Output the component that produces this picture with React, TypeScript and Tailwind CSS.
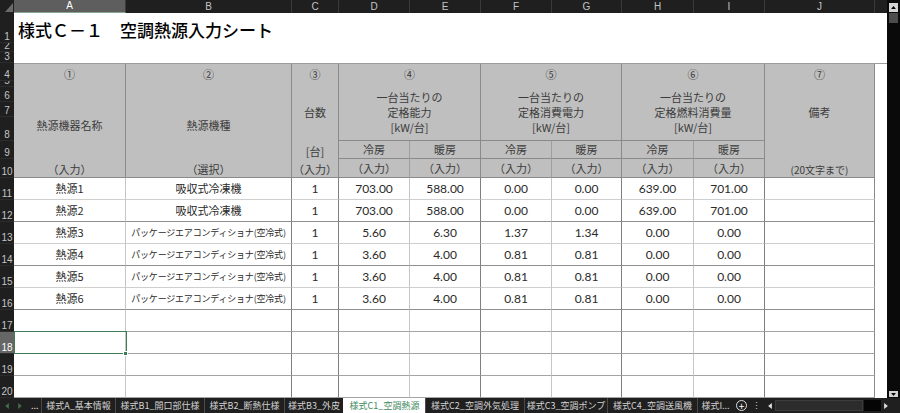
import React from 'react';

const JP = "font-['Noto_Sans_CJK_JP','Noto_Sans',sans-serif]";
const NUM = "font-['Lato','Noto_Sans_CJK_JP',sans-serif]";
const GRID =
  'grid grid-cols-[112px_166px_47px_71px_71px_71px_70px_72px_71px_110px_12px]';

// right border colour of each column in the body
const VLINE = [
  'border-r-[#c6c6c6]',
  'border-r-[#7f7f7f]',
  'border-r-[#7f7f7f]',
  'border-r-[#c6c6c6]',
  'border-r-[#7f7f7f]',
  'border-r-[#c6c6c6]',
  'border-r-[#7f7f7f]',
  'border-r-[#c6c6c6]',
  'border-r-[#7f7f7f]',
  'border-r-[#8a8a8a]',
];

const HLINE = [
  'border-b-[#cfcfcf]',
  'border-b-[#8f8f8f]',
  'border-b-[#cfcfcf]',
  'border-b-[#8f8f8f]',
  'border-b-[#cfcfcf]',
  'border-b-[#8f8f8f]',
  'border-b-[#a4a4a4]',
  'border-b-[#a4a4a4]',
  'border-b-[#a4a4a4]',
  'border-b-[#a4a4a4]',
];

const ROWS: [string, string][] = [
  ['1', 'h-[30px]'],
  ['2', 'h-[9px]'],
  ['3', 'h-[11px]'],
  ['4', 'h-[18px]'],
  ['5', 'h-[6px]'],
  ['6', 'h-[15px]'],
  ['7', 'h-[15px]'],
  ['8', 'h-[24px]'],
  ['9', 'h-[18px]'],
  ['10', 'h-[19px]'],
  ['11', 'h-[22px]'],
  ['12', 'h-[22px]'],
  ['13', 'h-[22px]'],
  ['14', 'h-[22px]'],
  ['15', 'h-[22px]'],
  ['16', 'h-[22px]'],
  ['17', 'h-[22px]'],
  ['18', 'h-[22px]'],
  ['19', 'h-[22px]'],
  ['20', 'h-[22px]'],
];

const COL_HEAD: [string, string][] = [
  ['A', 'w-[112px]'],
  ['B', 'w-[166px]'],
  ['C', 'w-[47px]'],
  ['D', 'w-[71px]'],
  ['E', 'w-[71px]'],
  ['F', 'w-[71px]'],
  ['G', 'w-[70px]'],
  ['H', 'w-[72px]'],
  ['I', 'w-[71px]'],
  ['J', 'w-[110px]'],
];

const PAC = 'パッケージエアコンディショナ(空冷式)';
const DATA: string[][] = [
  ['熱源1', '吸収式冷凍機', '1', '703.00', '588.00', '0.00', '0.00', '639.00', '701.00', ''],
  ['熱源2', '吸収式冷凍機', '1', '703.00', '588.00', '0.00', '0.00', '639.00', '701.00', ''],
  ['熱源3', PAC, '1', '5.60', '6.30', '1.37', '1.34', '0.00', '0.00', ''],
  ['熱源4', PAC, '1', '3.60', '4.00', '0.81', '0.81', '0.00', '0.00', ''],
  ['熱源5', PAC, '1', '3.60', '4.00', '0.81', '0.81', '0.00', '0.00', ''],
  ['熱源6', PAC, '1', '3.60', '4.00', '0.81', '0.81', '0.00', '0.00', ''],
  ['', '', '', '', '', '', '', '', '', ''],
  ['', '', '', '', '', '', '', '', '', ''],
  ['', '', '', '', '', '', '', '', '', ''],
  ['', '', '', '', '', '', '', '', '', ''],
];

const TABS: [string, string][] = [
  ['様式A_基本情報', 'w-[74px]'],
  ['様式B1_開口部仕様', 'w-[89px]'],
  ['様式B2_断熱仕様', 'w-[80px]'],
  ['様式B3_外皮', 'w-[59px]'],
  ['様式C1_空調熱源', 'w-[82px]'],
  ['様式C2_空調外気処理', 'w-[99px]'],
  ['様式C3_空調ポンプ', 'w-[83px]'],
  ['様式C4_空調送風機', 'w-[90px]'],
  ['様式I...', 'w-[36px]'],
];

const Line = ({ children, cls = '' }: { children: React.ReactNode; cls?: string }) => (
  <div className={`flex items-center justify-center whitespace-nowrap ${cls}`}>{children}</div>
);

const Header = () => {
  const cell = 'bg-[#bfbfbf] border-r border-r-[#8a8a8a] overflow-hidden';
  return (
    <div className={`${GRID} grid-rows-[77px_18px_19px] border-t border-t-[#9c9c9c] text-[11px] text-[#3c3c3c]`}>
      <div className={`${cell} col-start-1 row-start-1 row-span-3 border-b border-b-[#8a8a8a] flex flex-col`}>
        <Line cls="h-[20px]">①</Line>
        <Line cls="h-[16px] mt-[33px]">熱源機器名称</Line>
        <Line cls="h-[16px] mt-[28px]">（入力）</Line>
      </div>
      <div className={`${cell} col-start-2 row-start-1 row-span-3 border-b border-b-[#8a8a8a] flex flex-col`}>
        <Line cls="h-[20px]">②</Line>
        <Line cls="h-[16px] mt-[33px]">熱源機種</Line>
        <Line cls="h-[16px] mt-[28px]">（選択）</Line>
      </div>
      <div className={`${cell} col-start-3 row-start-1 row-span-3 border-b border-b-[#8a8a8a] flex flex-col`}>
        <Line cls="h-[20px]">③</Line>
        <Line cls="h-[16px] mt-[20px]">台数</Line>
        <Line cls="h-[16px] mt-[23px]">[台]</Line>
        <Line cls="h-[16px] mt-[2px]">（入力）</Line>
      </div>
      {[
        ['④', '定格能力', 'col-start-4'],
        ['⑤', '定格消費電力', 'col-start-6'],
        ['⑥', '定格燃料消費量', 'col-start-8'],
      ].map(([n, t, c]) => (
        <div key={n} className={`${cell} ${c} col-span-2 row-start-1 border-b border-b-[#8a8a8a] flex flex-col`}>
          <Line cls="h-[20px]">{n}</Line>
          <div className="mt-[6px] leading-[15px] text-center whitespace-nowrap">
            一台当たりの
            <br />
            {t}
          </div>
          <Line cls="h-[15px]">[kW/台]</Line>
        </div>
      ))}
      {['col-start-4', 'col-start-5', 'col-start-6', 'col-start-7', 'col-start-8', 'col-start-9'].map((c, i) => (
        <Line
          key={c}
          cls={`bg-[#bfbfbf] row-start-2 ${c} border-b border-b-[#8a8a8a] border-r ${i % 2 ? 'border-r-[#8a8a8a]' : 'border-r-[#9e9e9e]'}`}
        >
          {i % 2 ? '暖房' : '冷房'}
        </Line>
      ))}
      {['col-start-4', 'col-start-5', 'col-start-6', 'col-start-7', 'col-start-8', 'col-start-9'].map((c, i) => (
        <Line
          key={c}
          cls={`bg-[#bfbfbf] row-start-3 ${c} border-b border-b-[#8a8a8a] border-r ${i % 2 ? 'border-r-[#8a8a8a]' : 'border-r-[#9e9e9e]'}`}
        >
          （入力）
        </Line>
      ))}
      <div className={`${cell} col-start-10 row-start-1 row-span-3 border-b border-b-[#8a8a8a] flex flex-col`}>
        <Line cls="h-[20px]">⑦</Line>
        <Line cls="h-[16px] mt-[20px]">備考</Line>
        <Line cls="h-[16px] mt-[41px] text-[10px]">(20文字まで)</Line>
      </div>
      <div className="col-start-11 row-start-1 row-span-3 bg-white" />
    </div>
  );
};

const Body = () => (
  <div className="flex flex-col">
    {DATA.map((row, r) => (
      <div key={r} className={`${GRID} h-[22px]`}>
        {row.map((v, c) => {
          const isNum = c >= 2;
          const small = v === PAC;
          const selected = r === 7 && c === 0;
          return (
            <div
              key={c}
              className={`relative flex items-center justify-center whitespace-nowrap border-r border-b ${VLINE[c]} ${HLINE[r]} text-[#2a2a2a] ${
                isNum ? `${NUM} text-[12px]` : small ? 'text-[9px] tracking-[-0.2px]' : 'text-[11px]'
              } ${selected ? 'z-10' : ''}`}
            >
              {v}
              {selected && (
                <>
                  <div className="absolute left-0 top-[-1px] w-[113px] h-[23px] border border-[#3c7d57]" />
                  <div className="absolute left-[109px] top-[19px] w-[5px] h-[5px] bg-[#3c7d57] border border-white" />
                </>
              )}
            </div>
          );
        })}
        <div className="bg-white" />
      </div>
    ))}
  </div>
);

const Tri = ({ dir, cls }: { dir: 'l' | 'r' | 'u' | 'd'; cls: string }) => {
  const pts = {
    l: '5,0 5,8 0,4',
    r: '0,0 0,8 5,4',
    u: '0,5 8,5 4,0',
    d: '0,0 8,0 4,5',
  }[dir];
  const vb = dir === 'l' || dir === 'r' ? '0 0 5 8' : '0 0 8 5';
  return (
    <svg viewBox={vb} className={cls}>
      <polygon points={pts} fill="currentColor" />
    </svg>
  );
};

export default function App() {
  return (
    <div className={`w-[900px] h-[413px] overflow-hidden bg-[#1f1f1f] flex flex-col ${JP}`}>
      <div className="flex h-[398px]">
        <div className="flex flex-col w-[887px]">
          {/* column letters */}
          <div className="flex h-[13px] text-[10px] leading-none text-[#c4c4c4] font-['Liberation_Sans',sans-serif]">
            <div className="w-[14px] h-[13px]">
              <svg viewBox="0 0 14 13" className="w-[14px] h-[13px]">
                <polygon points="5,12 13,12 13,3" fill="#6a6a6a" />
              </svg>
            </div>
            {COL_HEAD.map(([l, w]) => (
              <div
                key={l}
                className={`${w} flex items-center justify-center border-r border-r-[#3a3a3a] ${
                  l === 'A' ? 'bg-[#5e5e5e] text-white border-b border-b-[#86a890]' : ''
                }`}
              >
                {l}
              </div>
            ))}
            <div className="flex-1" />
          </div>
          <div className="flex flex-1">
            {/* row numbers */}
            <div className="w-[14px] flex flex-col text-[10px] leading-none text-[#c4c4c4] font-['Liberation_Sans',sans-serif]">
              {ROWS.map(([n, h]) => (
                <div
                  key={n}
                  className={`${h} flex items-end justify-center overflow-hidden border-b border-b-[#2c2c2c] ${
                    n === '18' ? 'bg-[#666666] text-white' : ''
                  }`}
                >
                  {n}
                </div>
              ))}
            </div>
            {/* sheet */}
            <div className="flex-1 bg-white flex flex-col">
              <div className="h-[50px] flex items-start pt-[7px] pl-[4px]">
                <span className="text-[17px] leading-[20px] font-medium text-black whitespace-nowrap">
                  様式Ｃ－１　空調熱源入力シート
                </span>
              </div>
              <Header />
              <Body />
            </div>
          </div>
        </div>
        {/* vertical scrollbar */}
        <div className="w-[13px] bg-[#0a0a0a] flex flex-col items-center">
          <div className="mt-[3px] w-[9px] h-[9px] bg-[#d4d4d4] flex items-center justify-center text-black">
            <Tri dir="u" cls="w-[5px] h-[3px]" />
          </div>
          <div className="mt-[1px] w-[9px] h-[10px] bg-[#4c4c4c]" />
          <div className="flex-1" />
          <div className="mb-[1px] w-[9px] h-[6px] bg-[#d4d4d4] flex items-center justify-center text-black">
            <Tri dir="d" cls="w-[5px] h-[3px]" />
          </div>
        </div>
      </div>
      {/* sheet tabs */}
      <div className="h-[15px] flex items-center text-[9px] leading-none text-[#d2d2d2]">
        <div className="w-[41px] h-full flex items-center">
          <Tri dir="l" cls="ml-[5px] w-[4px] h-[6px] text-[#3e6b4d]" />
          <Tri dir="r" cls="ml-[9px] w-[4px] h-[6px] text-[#3e6b4d]" />
          <span className="ml-[9px] text-[#e0e0e0]">...</span>
        </div>
        {TABS.map(([t, w]) => {
          const active = t === '様式C1_空調熱源';
          return (
            <div
              key={t}
              className={`${w} h-full flex items-center justify-center whitespace-nowrap border-l ${
                active ? 'bg-white text-[#3d8a5e] border-l-transparent' : 'border-l-[#4a4a4a]'
              }`}
            >
              {t}
            </div>
          );
        })}
        <div className="ml-[3px] w-[11px] h-[11px] rounded-full border border-[#e0e0e0] flex items-center justify-center text-[10px] text-white leading-none">
          +
        </div>
        <div className="ml-[5px] text-[#d0d0d0]">⋮</div>
        <Tri dir="l" cls="ml-[7px] w-[4px] h-[6px] text-[#e0e0e0]" />
        <div className="ml-[3px] w-[88px] h-[11px] bg-[#2c2c2c] border border-[#3c3c3c]" />
        <div className="ml-[1px] w-[17px] h-[11px] bg-[#050505]" />
        <Tri dir="r" cls="ml-[3px] w-[4px] h-[6px] text-[#e0e0e0]" />
        <div className="flex-1" />
      </div>
    </div>
  );
}
